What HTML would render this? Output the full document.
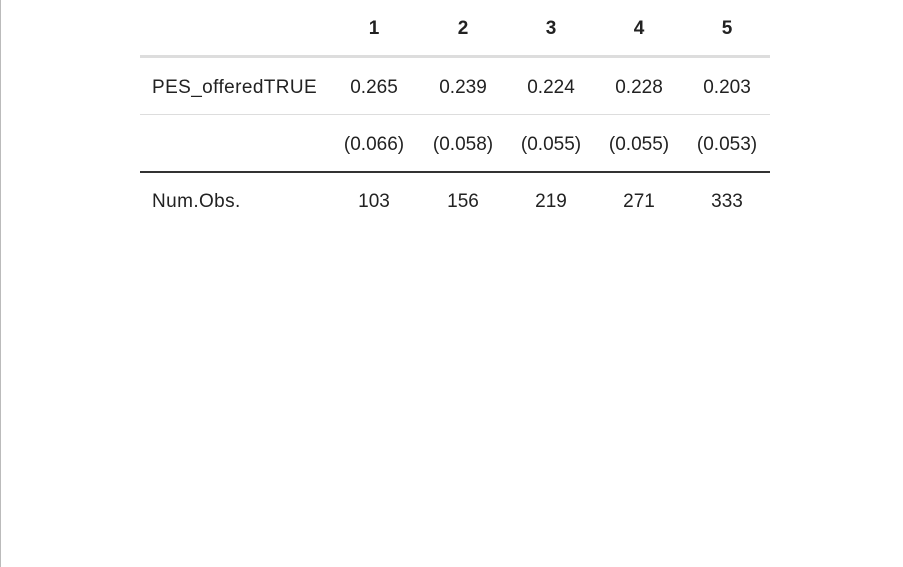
<!DOCTYPE html>
<html><head><style>
body{margin:0;width:903px;height:567px;background:#fff;border-left:1px solid #bbb;box-sizing:border-box;position:relative;overflow:hidden;font-family:"Liberation Sans","DejaVu Sans",sans-serif;font-size:19px;color:#222}
.r{position:absolute;left:139px;width:630px}
.c{position:absolute;width:88px;text-align:center;transform:translateX(-44px)}
.l{position:absolute;left:12px;letter-spacing:0.4px}
</style></head><body>
<div class="r" style="top:18px;font-weight:bold">
<span class="c" style="left:234px">1</span><span class="c" style="left:323px">2</span><span class="c" style="left:411px">3</span><span class="c" style="left:499px">4</span><span class="c" style="left:587px">5</span></div>
<div class="r" style="top:55px;height:3px;background:#ddd"></div>
<div class="r" style="top:77px"><span class="l">PES_offeredTRUE</span>
<span class="c" style="left:234px">0.265</span><span class="c" style="left:323px">0.239</span><span class="c" style="left:411px">0.224</span><span class="c" style="left:499px">0.228</span><span class="c" style="left:587px">0.203</span></div>
<div class="r" style="top:114px;height:1px;background:#ddd"></div>
<div class="r" style="top:134px">
<span class="c" style="left:234px">(0.066)</span><span class="c" style="left:323px">(0.058)</span><span class="c" style="left:411px">(0.055)</span><span class="c" style="left:499px">(0.055)</span><span class="c" style="left:587px">(0.053)</span></div>
<div class="r" style="top:171px;height:2px;background:#333"></div>
<div class="r" style="top:191px"><span class="l">Num.Obs.</span>
<span class="c" style="left:234px">103</span><span class="c" style="left:323px">156</span><span class="c" style="left:411px">219</span><span class="c" style="left:499px">271</span><span class="c" style="left:587px">333</span></div>
</body></html>
